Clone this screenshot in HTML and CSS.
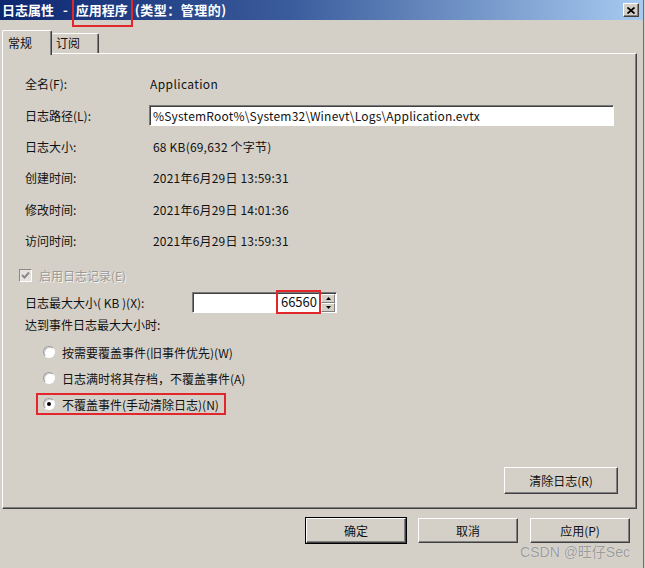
FILE: index.html
```html
<!DOCTYPE html>
<html lang="zh-CN">
<head>
<meta charset="utf-8">
<title>日志属性 - 应用程序</title>
<link rel="stylesheet" href="styles.css">
</head>
<body>
<div class="window">
  <div class="titlebar">
    <span class="title">日志属性<span class="sep">-</span><span class="hl">应用程序</span><span class="type">(类型：管理的)</span></span>
    <span class="close"><svg width="8" height="7" viewBox="0 0 8 7"><path d="M0.5 0.5 L7.5 6.5 M7.5 0.5 L0.5 6.5" stroke="#000" stroke-width="1.8" fill="none"/></svg></span>
  </div>

  <div class="tabs">
    <div class="tab active">常规</div>
    <div class="tab">订阅</div>
  </div>

  <div class="panel">
    <div class="info">
      <div class="label">全名(F):</div><div class="value app">Application</div>
      <div class="label">日志路径(L):</div><div class="field-cell"><div class="textbox">%SystemRoot%\System32\Winevt\Logs\Application.evtx</div></div>
      <div class="label">日志大小:</div><div class="value">68 KB(69,632 个字节)</div>
      <div class="label">创建时间:</div><div class="value">2021年6月29日 13:59:31</div>
      <div class="label">修改时间:</div><div class="value">2021年6月29日 14:01:36</div>
      <div class="label">访问时间:</div><div class="value">2021年6月29日 13:59:31</div>
    </div>

    <div class="check-row">
      <span class="checkbox"><svg width="9" height="9" viewBox="0 0 9 9"><path d="M1 4 L3.5 6.5 L8 1.5" stroke="#8a8a8a" stroke-width="2" fill="none"/></svg></span>
      <span class="disabled">启用日志记录(E)</span>
    </div>

    <div class="spin-row">
      <span class="spin-label">日志最大大小( KB )(X):</span>
      <div class="spin">
        <div class="spin-field"><span class="mark">66560</span></div>
        <div class="spin-btns">
          <span class="spin-btn"><svg width="5" height="3" viewBox="0 0 5 3"><path d="M2.5 0 L5 3 L0 3 Z" fill="#000"/></svg></span>
          <span class="spin-btn"><svg width="5" height="3" viewBox="0 0 5 3"><path d="M0 0 L5 0 L2.5 3 Z" fill="#000"/></svg></span>
        </div>
      </div>
    </div>

    <div class="plain-row">达到事件日志最大大小时:</div>

    <div class="radio-row first"><span class="radio"></span>按需要覆盖事件(旧事件优先)(W)</div>
    <div class="radio-row"><span class="radio"></span>日志满时将其存档，不覆盖事件(A)</div>
    <div class="radio-row marked"><span class="radio checked"></span>不覆盖事件(手动清除日志)(N)</div>

    <div class="panel-foot"><button class="btn clear">清除日志(R)</button></div>
  </div>

  <div class="footer">
    <button class="btn default">确定</button>
    <button class="btn">取消</button>
    <button class="btn">应用(P)</button>
  </div>

  <div class="watermark">CSDN @旺仔Sec</div>
</div>
</body>
</html>
```

FILE: styles.css
```css
html, body {
  margin: 0;
  padding: 0;
}
body {
  width: 645px;
  height: 568px;
  overflow: hidden;
  background: #d4d0c8;
  font-family: "Noto Sans CJK SC", "Noto Sans", sans-serif;
  font-size: 12px;
  color: #111;
}
.window {
  position: relative;
  width: 644px;
  height: 568px;
  box-sizing: border-box;
  border-right: 1px solid #6e6e6e;
  display: flex;
  flex-direction: column;
}

/* title bar */
.titlebar {
  position: relative;
  z-index: 2;
  height: 20px;
  flex: none;
  display: flex;
  align-items: center;
  justify-content: space-between;
  padding: 0 4px 0 2px;
  background: linear-gradient(90deg, #0c2670 0%, #3b5c9c 45%, #a6caf0 100%);
  color: #fff;
  font-weight: bold;
  font-size: 13px;
  line-height: 20px;
}
.title { white-space: nowrap; }
.sep { margin: 0 8px 0 9px; }
.hl { position: relative; }
.hl::after {
  content: "";
  position: absolute;
  left: -4px;
  right: -5px;
  top: -10px;
  bottom: -8px;
  border: 2px solid #e3262c;
}
.type { margin-left: 7px; letter-spacing: 0.5px; }
.close {
  width: 16px;
  height: 14px;
  box-sizing: border-box;
  display: flex;
  align-items: center;
  justify-content: center;
  background: #d4d0c8;
  border: 1px solid;
  border-color: #fff #404040 #404040 #fff;
  box-shadow: inset -1px -1px #808080;
}

/* tabs */
.tabs {
  flex: none;
  margin-top: 10px;
  padding-left: 2px;
  height: 23px;
  display: flex;
  align-items: flex-start;
  position: relative;
  z-index: 1;
}
.tab {
  box-sizing: border-box;
  background: #d4d0c8;
  border-top: 1px solid #fff;
  border-left: 1px solid #fff;
  border-right: 1px solid #404040;
  box-shadow: inset -1px 0 #808080;
  border-radius: 2px 2px 0 0;
  line-height: 18px;
}
.tab.active {
  width: 50px;
  height: 25px;
  padding: 3px 0 0 5px;
}
.tab:not(.active) {
  width: 47px;
  height: 20px;
  margin-top: 3px;
  padding-left: 4px;
  border-left: none;
}

/* panel */
.panel {
  flex: none;
  margin-left: 2px;
  width: 635px;
  height: 456px;
  box-sizing: border-box;
  border: 1px solid;
  border-color: #fff #404040 #404040 #fff;
  box-shadow: inset -1px -1px #808080;
  padding: 14px 0 0 22px;
  display: flex;
  flex-direction: column;
}
.info {
  display: grid;
  grid-template-columns: 124px 465px;
  grid-template-rows: 31px 33px 29px 32px 32px 31px;
  align-items: center;
}
.value { padding-left: 4px; white-space: nowrap; letter-spacing: 0.2px; }
.value.app { padding-left: 1px; letter-spacing: 0.4px; }
.textbox {
  height: 21px;
  box-sizing: border-box;
  background: #fff;
  border: 1px solid;
  border-color: #7a7a7a #fff #fff #7a7a7a;
  box-shadow: inset 1px 1px #404040;
  padding-left: 3px;
  line-height: 19px;
  white-space: nowrap;
  overflow: hidden;
  letter-spacing: 0.2px;
}

.check-row {
  margin-top: 8px;
  margin-left: -6px;
  height: 22px;
  display: flex;
  align-items: center;
  gap: 7px;
}
.checkbox {
  width: 13px;
  height: 13px;
  box-sizing: border-box;
  border: 1px solid;
  border-color: #8a8a8a #fff #fff #8a8a8a;
  background: #e6e3de;
  display: flex;
  align-items: center;
  justify-content: center;
}
.disabled {
  color: #9a9a9a;
  text-shadow: 1px 1px #f4f4f4;
}

.spin-row {
  margin-top: 5px;
  height: 22px;
  display: flex;
  align-items: center;
}
.spin-label { width: 167px; }
.spin {
  width: 145px;
  height: 21px;
  box-sizing: border-box;
  display: flex;
  border: 1px solid;
  border-color: #7a7a7a #fff #fff #7a7a7a;
  box-shadow: inset 1px 1px #404040;
  background: #fff;
}
.spin-field {
  flex: 1;
  display: flex;
  justify-content: flex-end;
  align-items: center;
}
.mark {
  display: inline-block;
  height: 24px;
  line-height: 24px;
  margin: -2px 0 -2px;
  padding: 0 4px 0 5px;
  font-size: 13px;
  outline: 2px solid #e3262c;
  outline-offset: -2px;
  position: relative;
  z-index: 1;
}
.spin-btns {
  width: 14px;
  display: flex;
  flex-direction: column;
  padding: 1px 1px 0 0;
}
.spin-btn {
  flex: 1;
  box-sizing: border-box;
  background: #d4d0c8;
  border: 1px solid;
  border-color: #fff #808080 #808080 #fff;
  display: flex;
  align-items: center;
  justify-content: center;
}

.plain-row {
  margin-top: 3px;
  height: 18px;
  line-height: 18px;
}

.radio-row {
  height: 22px;
  margin-top: 4px;
  padding-left: 18px;
  display: flex;
  align-items: center;
  gap: 7px;
  white-space: nowrap;
}
.radio-row.first { margin-top: 7px; }
.radio-row.marked {
  align-self: flex-start;
  margin-left: 11px;
  padding-left: 7px;
  padding-right: 7px;
  outline: 2px solid #e3262c;
  outline-offset: -2px;
}
.radio {
  width: 12px;
  height: 12px;
  box-sizing: border-box;
  border-radius: 50%;
  background: #fff;
  border: 1px solid;
  border-color: #9a9a9a #fff #fff #9a9a9a;
  box-shadow: inset 1px 1px #cfcfcf;
  position: relative;
}
.radio.checked::after {
  content: "";
  position: absolute;
  left: 3px;
  top: 3px;
  width: 4px;
  height: 4px;
  border-radius: 50%;
  background: #000;
}

.panel-foot {
  margin-top: auto;
  margin-bottom: 14px;
  padding-right: 18px;
  display: flex;
  justify-content: flex-end;
}

/* buttons */
.btn {
  font-family: inherit;
  font-size: 12px;
  color: #111;
  background: #d4d0c8;
  border: 1px solid;
  border-color: #fff #404040 #404040 #fff;
  box-shadow: inset -1px -1px #808080;
  padding: 0;
  margin: 0;
}
.btn.clear {
  width: 114px;
  height: 27px;
}
.footer {
  flex: none;
  margin-top: 9px;
  padding-right: 13px;
  display: flex;
  justify-content: flex-end;
  gap: 12px;
}
.footer .btn {
  width: 100px;
  height: 25px;
}
.btn.default {
  outline: 1px solid #000;
}

.watermark {
  position: absolute;
  right: 13px;
  top: 543px;
  font-family: "Liberation Sans", "Noto Sans CJK SC", sans-serif;
  font-size: 14px;
  line-height: 18px;
  color: #9b9b9b;
  text-shadow: 0 0 1px #f2f2f2;
}
```
